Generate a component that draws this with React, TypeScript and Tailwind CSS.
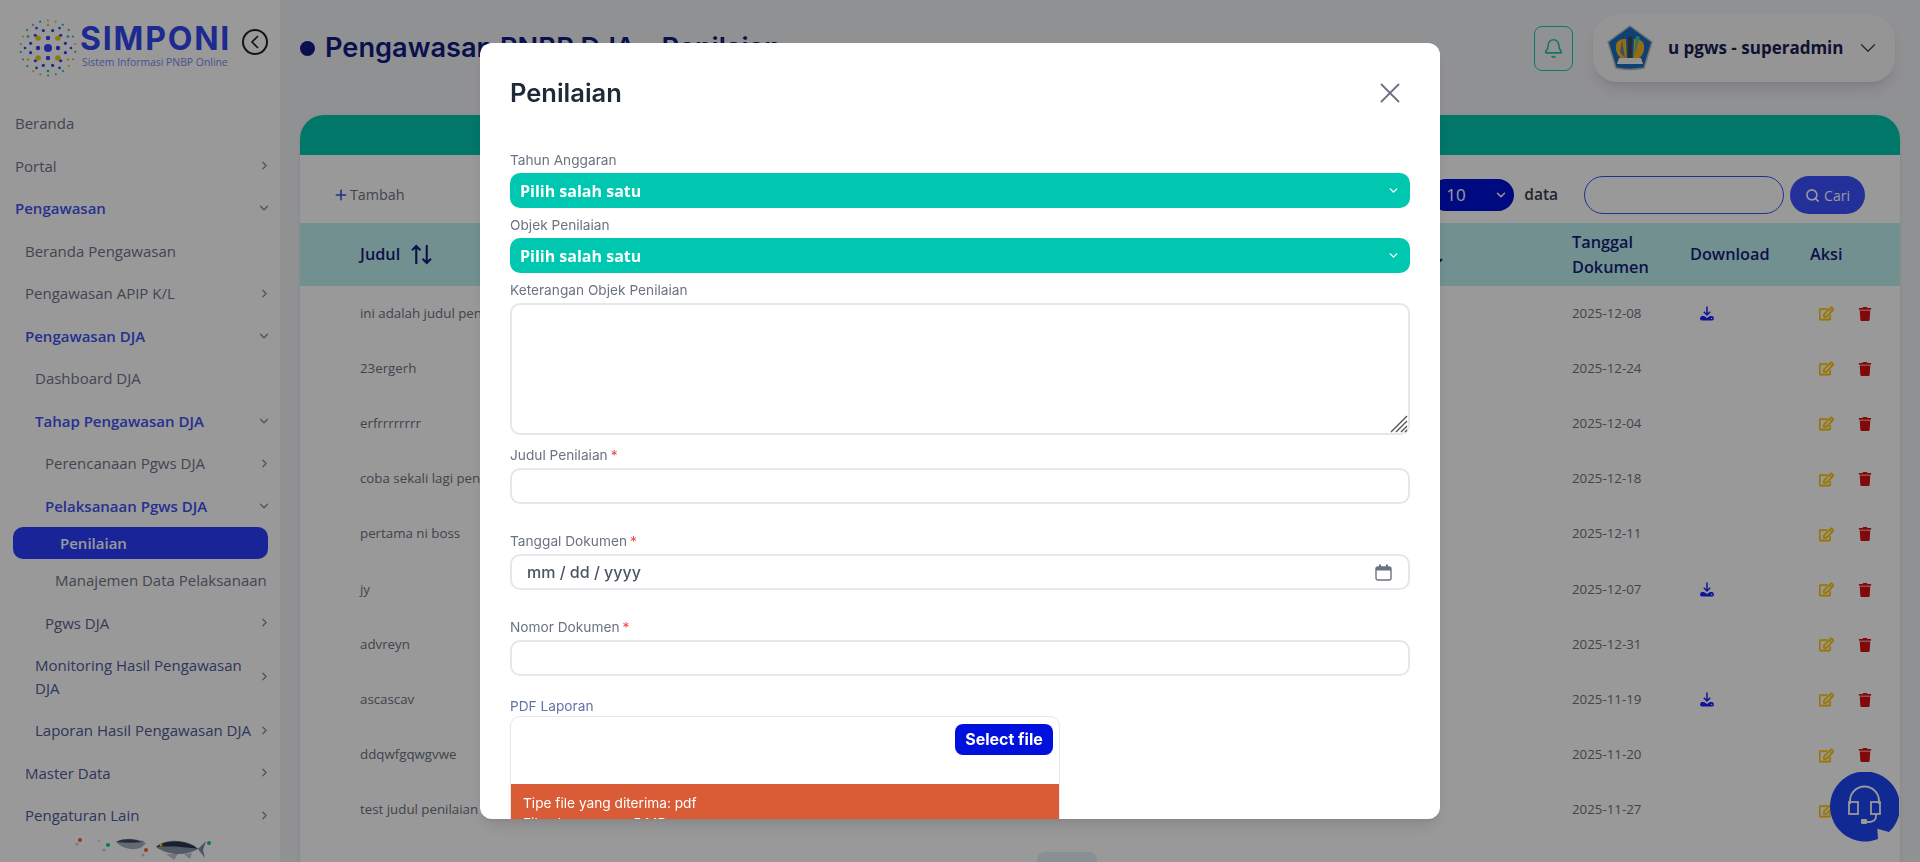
import { Bell, ChevronDown, ChevronRight, Plus, Search, X } from 'lucide-react';
import { FaRegEdit, FaTrash } from 'react-icons/fa';

type MenuItem = {
  label: string;
  indent: string;
  tone: string;
  chevron?: 'right' | 'down';
  active?: boolean;
};

const menu: MenuItem[] = [
  { label: 'Beranda', indent: 'pl-[15px]', tone: 'text-[#6f7488]' },
  { label: 'Portal', indent: 'pl-[15px]', tone: 'text-[#6f7488]', chevron: 'right' },
  { label: 'Pengawasan', indent: 'pl-[15px]', tone: 'text-[#3f50f0] font-semibold', chevron: 'down' },
  { label: 'Beranda Pengawasan', indent: 'pl-[25px]', tone: 'text-[#6f7488]' },
  { label: 'Pengawasan APIP K/L', indent: 'pl-[25px]', tone: 'text-[#6f7488]', chevron: 'right' },
  { label: 'Pengawasan DJA', indent: 'pl-[25px]', tone: 'text-[#3f50f0] font-semibold', chevron: 'down' },
  { label: 'Dashboard DJA', indent: 'pl-[35px]', tone: 'text-[#6f7488]' },
  { label: 'Tahap Pengawasan DJA', indent: 'pl-[35px]', tone: 'text-[#3f50f0] font-semibold', chevron: 'down' },
  { label: 'Perencanaan Pgws DJA', indent: 'pl-[45px]', tone: 'text-[#6f7488]', chevron: 'right' },
  { label: 'Pelaksanaan Pgws DJA', indent: 'pl-[45px]', tone: 'text-[#3f50f0] font-semibold', chevron: 'down' },
  { label: 'Penilaian', indent: 'pl-[60px]', tone: 'text-white font-semibold', active: true },
  { label: 'Manajemen Data Pelaksanaan', indent: 'pl-[55px]', tone: 'text-[#6f7488]' },
  { label: 'Pgws DJA', indent: 'pl-[45px]', tone: 'text-[#5a6290]', chevron: 'right' },
  { label: 'Monitoring Hasil Pengawasan DJA', indent: 'pl-[35px]', tone: 'text-[#4f5a9a]', chevron: 'right' },
  { label: 'Laporan Hasil Pengawasan DJA', indent: 'pl-[35px]', tone: 'text-[#4f5a9a]', chevron: 'right' },
  { label: 'Master Data', indent: 'pl-[25px]', tone: 'text-[#4f5a9a]', chevron: 'right' },
  { label: 'Pengaturan Lain', indent: 'pl-[25px]', tone: 'text-[#4f5a9a]', chevron: 'right' },
];

const rows = [
  { judul: 'ini adalah judul penilaian', tanggal: '2025-12-08', file: true },
  { judul: '23ergerh', tanggal: '2025-12-24', file: false },
  { judul: 'erfrrrrrrrr', tanggal: '2025-12-04', file: false },
  { judul: 'coba sekali lagi penilaian', tanggal: '2025-12-18', file: false },
  { judul: 'pertama ni boss', tanggal: '2025-12-11', file: false },
  { judul: 'jy', tanggal: '2025-12-07', file: true },
  { judul: 'advreyn', tanggal: '2025-12-31', file: false },
  { judul: 'ascascav', tanggal: '2025-11-19', file: true },
  { judul: 'ddqwfgqwgvwe', tanggal: '2025-11-20', file: false },
  { judul: 'test judul penilaian', tanggal: '2025-11-27', file: false },
];

const rings = [
  { radius: 10, count: 4, size: 2.2, start: 0, colors: ['#3346f0'] },
  { radius: 14, count: 4, size: 2.7, start: 45, colors: ['#f5c518'] },
  { radius: 18, count: 12, size: 1.6, start: 15, colors: ['#3346f0'] },
  { radius: 23, count: 12, size: 1.3, start: 0, colors: ['#3346f0', '#f5c518', '#3346f0', '#10c4a8'] },
  { radius: 27.5, count: 22, size: 1.1, start: 8, colors: ['#10c4a8', '#f0a0a0', '#f5c518', '#10c4a8', '#8090f0'] },
];

function LogoDots() {
  return (
    <svg width="60" height="60" viewBox="-30 -30 60 60" className="shrink-0">
      <circle r="4" fill="#3346f0" />
      {rings.map(ring =>
        Array.from({ length: ring.count }).map((_, i) => {
          const angle = ((ring.start + (360 / ring.count) * i) * Math.PI) / 180;
          return (
            <circle
              key={`${ring.radius}-${i}`}
              cx={Math.cos(angle) * ring.radius}
              cy={Math.sin(angle) * ring.radius}
              r={ring.size}
              fill={ring.colors[i % ring.colors.length]}
            />
          );
        })
      )}
    </svg>
  );
}

function Fish() {
  return (
    <svg width="150" height="24" viewBox="0 0 150 24" className="ml-[68px]">
      <circle cx="12" cy="3" r="2" fill="#ff5a30" />
      <circle cx="9" cy="7" r="1.5" fill="#ccc" />
      <circle cx="31" cy="4" r="1" fill="#ccc" />
      <circle cx="40" cy="8" r="2" fill="#10c4a8" />
      <circle cx="36" cy="13" r="1.5" fill="#ccc" />
      <circle cx="74" cy="5" r="1.5" fill="#10c4a8" />
      <circle cx="78" cy="13" r="2" fill="#ff5a30" />
      <circle cx="75" cy="18" r="1.5" fill="#ccc" />
      <circle cx="141" cy="6" r="2" fill="#10c4a8" />
      <path d="M48 5 C56 0 68 1 78 6 L74 10 C66 14 54 12 48 5 Z" fill="#a8b0be" />
      <path d="M48 5 C56 1 68 2 74 5 C66 6 56 6 48 5 Z" fill="#3d4a66" />
      <path d="M88 10 C98 1 120 2 130 12 C118 19 100 19 88 10 Z" fill="#8a96ac" />
      <path d="M88 10 C98 2 120 3 130 12 C118 10 100 9 88 10 Z" fill="#2a3650" />
      <path d="M130 12 L138 4 L135 13 L137 21 Z" fill="#7f8da8" />
      <path d="M98 17 L106 23 L110 17 Z M116 17 L122 22 L124 16 Z" fill="#c2c8d2" />
      <circle cx="93" cy="8" r="1.5" fill="#f5c518" />
    </svg>
  );
}

function Emblem() {
  return (
    <svg width="46" height="46" viewBox="0 0 46 46">
      <path d="M23 1 L45 17 L37 43 Q23 46 9 43 L1 17 Z" fill="#1a6fc0" stroke="#b8bcc4" strokeWidth="1.5" />
      <path d="M9 20 C8 29 13 34 20 36 L19 14 C14 14 10 15 9 20 Z" fill="#f5b520" />
      <path d="M37 20 C38 29 33 34 26 36 L27 14 C32 14 36 15 37 20 Z" fill="#f5b520" />
      <path d="M15 15 L18 33 L13 27 Z" fill="#6d7fa0" />
      <rect x="21" y="11" width="4" height="22" rx="2" fill="#3a4a60" />
      <path d="M29 11 L33 12 L27 32 Z" fill="#40c8a8" />
      <path d="M12 33 H34 L36 39 H10 Z" fill="#f5f5f5" />
    </svg>
  );
}

function DownloadIcon() {
  return (
    <svg width="14" height="15" viewBox="0 0 14 15" className="text-[#1a22ff]">
      <path d="M7 0.5 V8.5 M3.8 5.8 L7 9 L10.2 5.8" fill="none" stroke="currentColor" strokeWidth="1.5" />
      <path d="M1.5 10 L4 10 L7 12 L10 10 L12.5 10 Q14 11 14 12.5 Q14 14.5 12 14.5 H2 Q0 14.5 0 12.5 Q0 11 1.5 10 Z" fill="currentColor" />
      <circle cx="11.7" cy="12.4" r="0.7" fill="#fff" />
    </svg>
  );
}

function SupportButton() {
  return (
    <svg width="70" height="70" viewBox="0 0 70 70" className="absolute right-[21px] bottom-[20px]">
      <path d="M60 60 A35 35 0 1 0 49 67 L48.3 56.7 Z" fill="#1d45f5" />
      <path d="M21 32 V29 A14.5 14.5 0 0 1 50 29 V32" fill="none" stroke="#fff" strokeWidth="1.8" />
      <rect x="20" y="30" width="9" height="12" fill="none" stroke="#fff" strokeWidth="1.8" />
      <rect x="42" y="30" width="9" height="12" fill="none" stroke="#fff" strokeWidth="1.8" />
      <path d="M47 42 V44 Q47 49 41 50 H37" fill="none" stroke="#fff" strokeWidth="1.8" />
      <rect x="32" y="47" width="6" height="5" rx="1" fill="#fff" />
    </svg>
  );
}

function Sidebar() {
  return (
    <aside className="w-[280px] shrink-0 bg-white h-full overflow-hidden">
      <div className="h-[102px] flex items-start pt-[18px] pl-[18px]">
        <LogoDots />
        <div className="ml-[2px] mt-[7px] w-[150px]">
          <div className="font-['Inter',sans-serif] font-bold text-[32px] leading-[28px] tracking-[1.8px] text-[#3346f0]">SIMPONI</div>
          <div className="font-['Open_Sans',sans-serif] text-[10.4px] leading-[14px] mt-[2px] ml-[2px] whitespace-nowrap text-[#7a86ee]">Sistem Informasi PNBP Online</div>
        </div>
        <button className="ml-[12px] mt-[11px] w-[26px] h-[26px] shrink-0 rounded-full border-2 border-[#222] flex items-center justify-center">
          <svg width="10" height="14" viewBox="0 0 10 14"><path d="M8 1 L2 7 L8 13" fill="none" stroke="#222" strokeWidth="1.6" /></svg>
        </button>
      </div>
      <nav className="text-[15px] leading-[22.5px]">
        {menu.map(item =>
          item.active ? (
            <div key={item.label} className={`mx-[13px] w-[255px] h-8 bg-[#2b3cff] rounded-[10px] flex items-center pl-[47px] ${item.tone}`}>
              {item.label}
            </div>
          ) : (
            <div key={item.label} className={`flex items-center py-2.5 pr-[9px] ${item.indent} ${item.tone}`}>
              <span className="flex-1 min-w-0">{item.label}</span>
              {item.chevron === 'right' && <ChevronRight size={13} strokeWidth={2.2} className="shrink-0 ml-1 text-[#8a8a8a]" />}
              {item.chevron === 'down' && <ChevronDown size={14} strokeWidth={2.2} className="shrink-0 ml-1 text-[#8a8a8a]" />}
            </div>
          )
        )}
      </nav>
      <Fish />
    </aside>
  );
}

function DataTable() {
  return (
    <div className="bg-white rounded-t-[24px] shadow-sm">
      <div className="h-10 bg-[#00c7b0] rounded-t-[24px]"></div>
      <div className="h-[68px] pt-[21px] pl-[33px] pr-[35px] flex items-start">
        <div className="h-[38px] flex items-center text-[#6b7280] text-[14.3px]">
          <Plus size={16} strokeWidth={2.4} className="text-[#3f50f0] mr-[1px]" />
          Tambah
        </div>
        <div className="ml-auto h-[38px] flex items-center">
          <div className="w-[84px] h-8 rounded-full bg-[#0011d6] text-white flex items-center justify-between pl-[16px] pr-[6px] text-[17px] font-medium">
            10
            <ChevronDown size={14} strokeWidth={2.6} />
          </div>
          <span className="ml-[10px] mr-[26px] text-[15.5px] font-semibold text-[#374151]">data</span>
          <input className="w-[200px] h-[38px] rounded-[20px] border-[1.5px] border-[#3f50f0] outline-none bg-transparent" />
          <button className="ml-[6px] w-[75px] h-[38px] rounded-[20px] bg-[#3c50ff] text-white text-[14px] font-medium flex items-center justify-center gap-1">
            <Search size={15} strokeWidth={2.6} />
            Cari
          </button>
        </div>
      </div>
      <div className="h-[63px] bg-[#bef0f0] grid grid-cols-[1255px_118px_120px_107px] items-center text-[#141e7a] text-[16.3px] font-semibold leading-[25px]">
        <div className="pl-[60px] pr-[112px] flex items-center justify-between">
          <div className="flex items-center gap-[11px]">
            Judul
            <svg width="21" height="21" viewBox="0 0 20 20">
              <path d="M5 19 V2 M1 6 L5 2 L9 6 M15 1 V18 M11 14 L15 18 L19 14" fill="none" stroke="#141e7a" strokeWidth="2" />
            </svg>
          </div>
          <svg width="20" height="20" viewBox="0 0 20 20">
            <path d="M5 19 V2 M1 6 L5 2 L9 6 M15 1 V18 M11 14 L15 18 L19 14" fill="none" stroke="#141e7a" strokeWidth="2" />
          </svg>
        </div>
        <div className="pl-[17px]">Tanggal Dokumen</div>
        <div className="pl-[17px]">Download</div>
        <div className="pl-[17px]">Aksi</div>
      </div>
      {rows.map(row => (
        <div key={row.judul} className="h-[55.2px] grid grid-cols-[1255px_118px_120px_107px] items-center text-[13.3px] text-[#6b7280]">
          <div className="pl-[60px]">{row.judul}</div>
          <div className="pl-[17px]">{row.tanggal}</div>
          <div className="pl-[27px] flex items-center">{row.file && <DownloadIcon />}</div>
          <div className="pl-[26px] flex items-center gap-[24px]">
            <FaRegEdit size={15} stroke="currentColor" strokeWidth={24} className="text-[#ffc400]" />
            <FaTrash size={14} className="text-[#d81010]" />
          </div>
        </div>
      ))}
      <div className="flex justify-center pt-[14px] pr-[66px]">
        <div className="w-[60px] h-10 rounded-lg bg-[#e6eefa]"></div>
      </div>
    </div>
  );
}

function Field({ label, required, children, className }: { label: string; required?: boolean; children: React.ReactNode; className?: string }) {
  return (
    <div className={className}>
      <label className="block h-5 leading-5 mb-[3px] text-[13.7px] text-[#6b7280]">
        {label}
        {required && <span className="text-[#ef4444] ml-[3px]">*</span>}
      </label>
      {children}
    </div>
  );
}

function Penilaian() {
  return (
    <div className="fixed inset-0 bg-black/40 flex items-center justify-center font-['Inter',sans-serif]">
      <div className="w-[960px] h-[776px] bg-white rounded-[12px] shadow-lg overflow-hidden px-[30px]">
        <div className="h-[100px] flex items-center justify-between">
          <h2 className="text-[25.5px] font-semibold text-[#1f2937]">Penilaian</h2>
          <X size={34} strokeWidth={1.3} className="mr-[3px] text-[#6b7280]" />
        </div>
        <form className="mt-[7px]">
          <Field label="Tahun Anggaran">
            <SelectBox />
          </Field>
          <Field label="Objek Penilaian" className="mt-[7px]">
            <SelectBox />
          </Field>
          <Field label="Keterangan Objek Penilaian" className="mt-[7px]">
            <div className="relative h-[132px]">
              <textarea className="block w-full h-full resize-none rounded-[10px] border-2 border-[#e5e7eb] outline-none" />
              <svg width="18" height="18" viewBox="0 0 18 18" className="absolute right-[2px] bottom-[2px]">
                <path d="M1 17 L17 1 M6 17 L17 6 M11 17 L17 11 M15 17 L17 15" stroke="#555" strokeWidth="1.4" />
              </svg>
            </div>
          </Field>
          <Field label="Judul Penilaian" required className="mt-[10px]">
            <input className="block w-full h-[36px] rounded-[10px] border-2 border-[#e5e7eb] outline-none" />
          </Field>
          <Field label="Tanggal Dokumen" required className="mt-[27px]">
            <div className="h-[36px] rounded-[10px] border-2 border-[#e5e7eb] flex items-center justify-between pl-[15px] pr-[16px]">
              <input placeholder="mm / dd / yyyy" className="flex-1 outline-none text-[16px] font-medium placeholder:text-[#4b5563]" />
              <svg width="17" height="17" viewBox="0 0 17 17">
                <rect x="1" y="3" width="15" height="13" rx="2" fill="none" stroke="#6b7280" strokeWidth="1.4" />
                <path d="M1 3.5 Q1 3 3 3 H14 Q16 3 16 3.5 V6.5 H1 Z M4 0.5 H6 V3 H4 Z M11 0.5 H13 V3 H11 Z" fill="#6b7280" />
              </svg>
            </div>
          </Field>
          <Field label="Nomor Dokumen" required className="mt-[27px]">
            <input className="block w-full h-[36px] rounded-[10px] border-2 border-[#e5e7eb] outline-none" />
          </Field>
          <div className="mt-[20px] w-[550px]">
            <label className="block h-5 leading-5 text-[13.7px] text-[#6470a8]">PDF Laporan</label>
            <div className="rounded-t-[10px] border-[1.5px] border-[#e5e7eb] overflow-hidden">
              <div className="h-[67px] flex items-start justify-end pt-[7px] pr-[6px]">
                <button type="button" className="w-[98px] h-[31px] pb-[2px] rounded-[8px] bg-[#0011dd] text-white text-[16px] font-bold">Select file</button>
              </div>
              <div className="bg-[#d95c36] text-white text-[13.7px] leading-[20px] pl-[12px] pt-[9px] pb-3">
                <p>Tipe file yang diterima: pdf</p>
                <p>File ukuran max: 5 MB</p>
              </div>
            </div>
          </div>
        </form>
      </div>
    </div>
  );
}

function SelectBox() {
  return (
    <div className="h-[35px] rounded-[10px] bg-[#00c7b0] text-white flex items-center justify-between pl-[10px] pr-[10px] font-['Open_Sans',sans-serif] text-[16px] font-bold">
      Pilih salah satu
      <ChevronDown size={13} strokeWidth={2.6} />
    </div>
  );
}

export default function App() {
  return (
    <div className="relative h-screen flex overflow-hidden bg-[#f1f2f6] font-['Open_Sans',sans-serif]">
      <Sidebar />
      <main className="flex-1 min-w-0 px-5">
        <header className="h-[115px] pb-[19px] pr-[5px] flex items-center">
          <span className="w-[15px] h-[15px] rounded-full bg-[#111a80] mr-[10px]"></span>
          <h1 className="font-['Inter',sans-serif] text-[27.2px] font-semibold text-[#111a80]">Pengawasan PNBP DJA - Penilaian</h1>
          <div className="ml-auto w-[39px] h-[45px] rounded-lg border-[1.5px] border-[#1fc4ae] flex items-center justify-center">
            <Bell size={21} strokeWidth={1.8} className="text-[#1fc4ae]" />
          </div>
          <div className="ml-[20px] w-[302px] h-[67px] rounded-[24px] bg-[#f8f8fa] shadow-lg flex items-center pl-[14px]">
            <Emblem />
            <span className="ml-[15px] text-[17px] font-bold text-[#1a2050] whitespace-nowrap">u pgws - superadmin</span>
            <ChevronDown size={26} strokeWidth={1.2} className="ml-[12px] shrink-0 text-[#374151]" />
          </div>
        </header>
        <DataTable />
      </main>
      <SupportButton />
      <Penilaian />
    </div>
  );
}
